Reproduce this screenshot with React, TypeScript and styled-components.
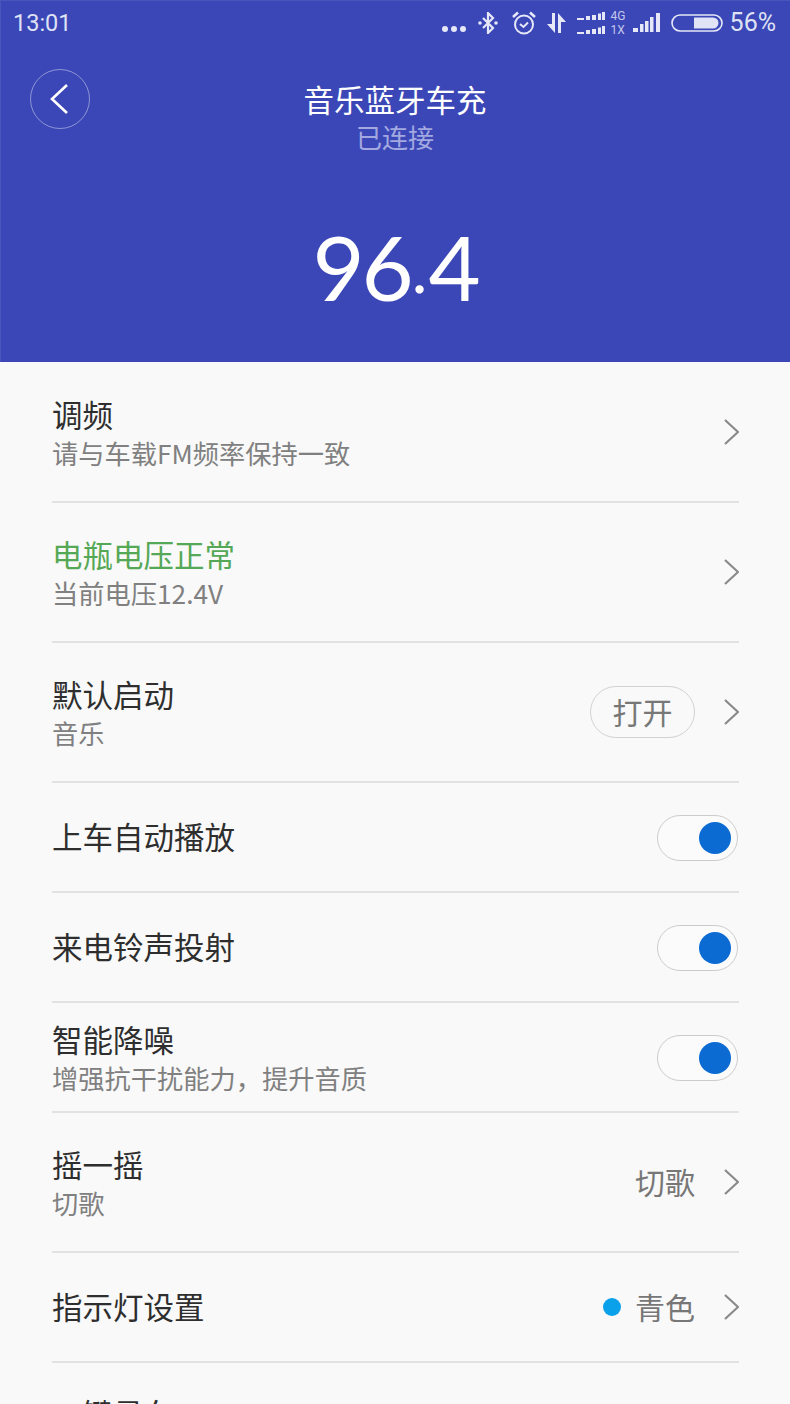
import React from 'react';
import styled, { createGlobalStyle } from 'styled-components';

const GlobalStyle = createGlobalStyle`
    html, body {
        margin: 0;
        padding: 0;
        background: #f9f9f9;
    }
    body {
        font-family: "Noto Sans CJK SC", "Noto Sans", sans-serif;
    }
`;

const Page = styled.div`
    width: 790px;
    height: 1404px;
    overflow: hidden;
    background: #f9f9f9;
`;

const Hero = styled.header`
    height: 362px;
    background: #3b47b7;
    box-shadow: inset 1px 1px 0 rgba(255, 255, 255, 0.08);
    display: flex;
    flex-direction: column;
`;

const StatusBar = styled.div`
    height: 45px;
    padding: 0 14px 0 13px;
    display: flex;
    align-items: center;
    justify-content: space-between;
    color: #dfe2f4;
    font-family: Roboto, sans-serif;
    font-size: 23.5px;
`;

const StatusIcons = styled.div`
    display: flex;
    align-items: center;
`;

const StatusIcon = styled.svg<{ $gap: number }>`
    display: block;
    margin-right: ${({ $gap }) => $gap}px;
    fill: none;
    stroke: #e6e8f7;
`;

const NetLabels = styled.div`
    width: 15px;
    margin-right: 7px;
    display: flex;
    flex-direction: column;
    font-size: 12px;
    line-height: 14px;
    color: #c3c7ea;
`;

const BatteryLevel = styled.span`
    font-size: 25px;
`;

const TitleBar = styled.div`
    margin-top: 24px;
    padding: 0 30px;
    display: grid;
    grid-template-columns: 60px 1fr 60px;
    align-items: start;
`;

const BackButton = styled.button`
    width: 60px;
    height: 60px;
    padding: 0 3px 0 0;
    border: 1px solid rgba(255, 255, 255, 0.42);
    border-radius: 50%;
    background: none;
    display: flex;
    align-items: center;
    justify-content: center;
`;

const TitleBlock = styled.div`
    display: flex;
    flex-direction: column;
    align-items: center;
    margin-top: 10px;
`;

const DeviceName = styled.div`
    color: #fff;
    font-size: 30.5px;
    line-height: 40px;
`;

const DeviceState = styled.div`
    color: #a3a9e0;
    font-size: 26px;
    line-height: 36px;
`;

const Frequency = styled.div`
    margin-top: 61px;
    text-align: center;
    color: #fff;
    font-family: Lato, sans-serif;
    font-weight: 400;
    font-size: 90px;
    letter-spacing: -3px;
    line-height: 100px;
`;

const FrequencyDot = styled.span`
    font-size: 66px;
    vertical-align: 8px;
    letter-spacing: 0;
    margin: 0 1px;
`;

const List = styled.ul`
    list-style: none;
    margin: 0;
    padding: 1px 51px 0 52px;
`;

const Row = styled.li<{ $height: number }>`
    height: ${({ $height }) => $height}px;
    box-sizing: border-box;
    border-bottom: 2px solid #e2e2e2;
    display: flex;
    align-items: center;
    justify-content: space-between;
`;

const RowText = styled.div`
    margin-top: 2px;
    display: flex;
    flex-direction: column;
`;

const RowTitle = styled.div<{ $ok?: boolean }>`
    color: ${({ $ok }) => ($ok ? '#55a855' : '#2e2e2e')};
    font-size: 30.5px;
    line-height: 40px;
`;

const SoloTitle = styled(RowTitle)`
    margin-bottom: 2px;
`;

const RowSub = styled.div`
    color: #808080;
    font-size: 26.25px;
    line-height: 38px;
`;

const RowRight = styled.div`
    display: flex;
    align-items: center;
`;

const Pill = styled.span`
    width: 105px;
    height: 52px;
    box-sizing: border-box;
    padding-bottom: 2px;
    border: 1px solid #d2d2d2;
    border-radius: 26px;
    color: #777;
    font-size: 30px;
    display: flex;
    align-items: center;
    justify-content: center;
`;

const Value = styled.span`
    margin-top: -2px;
    color: #777;
    font-size: 30px;
`;

const ColorDot = styled.span`
    width: 18px;
    height: 18px;
    border-radius: 50%;
    background: #0aa0ea;
    margin-right: 14px;
`;

const Chevron = styled.svg`
    display: block;
    margin-left: 29px;
    fill: none;
    stroke: #8a8a8a;
    stroke-width: 2.2;
`;

const Toggle = styled.span`
    width: 81px;
    height: 46px;
    margin-top: 2px;
    margin-right: 1px;
    box-sizing: border-box;
    border: 1px solid #cccccc;
    border-radius: 23px;
    background: #fbfbfb;
    padding-right: 6px;
    display: flex;
    align-items: center;
    justify-content: flex-end;
`;

const Knob = styled.span`
    width: 32px;
    height: 32px;
    border-radius: 50%;
    background: #0b6bd3;
`;

function Arrow() {
    return (
        <Chevron width="15" height="26" viewBox="0 0 15 26">
            <path d="M1 1 L14 13 L1 25" />
        </Chevron>
    );
}

export default function App() {
    return (
        <Page>
            <GlobalStyle />
            <Hero>
                <StatusBar>
                    <span>13:01</span>
                    <StatusIcons>
                        <StatusIcon $gap={12} width="24" height="20" viewBox="0 0 24 20">
                            <circle cx="3" cy="16" r="3" fill="#e6e8f7" stroke="none" />
                            <circle cx="12" cy="16" r="3" fill="#e6e8f7" stroke="none" />
                            <circle cx="21" cy="16" r="3" fill="#e6e8f7" stroke="none" />
                        </StatusIcon>
                        <StatusIcon $gap={14} width="20" height="22" viewBox="0 0 20 22" strokeWidth="2.2">
                            <path d="M5 6 L15 16 L10 21 L10 1 L15 6 L5 16" />
                            <circle cx="2" cy="11" r="1.8" fill="#e6e8f7" stroke="none" />
                            <circle cx="18" cy="11" r="1.8" fill="#e6e8f7" stroke="none" />
                        </StatusIcon>
                        <StatusIcon $gap={11} width="24" height="24" viewBox="0 0 24 24" strokeWidth="2">
                            <circle cx="12" cy="13.5" r="9" />
                            <path d="M8 13 L11.5 16 L16 11.5" />
                            <path d="M1 6 L6 1.5 M23 6 L18 1.5" strokeWidth="2.6" />
                        </StatusIcon>
                        <StatusIcon $gap={11} width="19" height="20" viewBox="0 0 19 20">
                            <path d="M5 0 H8 V20 L0 11 H5 Z" fill="#e6e8f7" stroke="none" />
                            <path d="M11 0 L19 9 H14 V20 H11 Z" fill="#e6e8f7" stroke="none" />
                        </StatusIcon>
                        <StatusIcon $gap={6} width="28" height="22" viewBox="0 0 28 22">
                            <g fill="#e6e8f7" stroke="none">
                                <rect x="0" y="6" width="7" height="2" />
                                <rect x="9" y="4" width="4" height="4" />
                                <rect x="15" y="3" width="4" height="5" />
                                <rect x="21" y="1.5" width="3" height="6.5" />
                                <rect x="25" y="0" width="3" height="8" />
                                <rect x="0" y="20" width="7" height="2" />
                                <rect x="9" y="18" width="4" height="4" />
                                <rect x="15" y="17" width="4" height="5" />
                                <rect x="21" y="15.5" width="3" height="6.5" />
                                <rect x="25" y="14" width="3" height="8" />
                            </g>
                        </StatusIcon>
                        <NetLabels>
                            <span>4G</span>
                            <span>1X</span>
                        </NetLabels>
                        <StatusIcon $gap={11} width="27" height="19" viewBox="0 0 27 19">
                            <g fill="#e6e8f7" stroke="none">
                                <rect x="0" y="15" width="5" height="4" />
                                <rect x="7" y="11" width="3.5" height="8" />
                                <rect x="12" y="8" width="3.5" height="11" />
                                <rect x="17" y="4" width="3.5" height="15" />
                                <rect x="23" y="0" width="4" height="19" />
                            </g>
                        </StatusIcon>
                        <StatusIcon $gap={7} width="52" height="18" viewBox="0 0 52 18">
                            <rect x="1" y="1" width="50" height="16" rx="8" strokeWidth="1.6" />
                            <path d="M23 3.5 H42 A5.5 5.5 0 0 1 42 14.5 H23 Z" fill="#e0e3f5" stroke="none" />
                        </StatusIcon>
                        <BatteryLevel>56%</BatteryLevel>
                    </StatusIcons>
                </StatusBar>
                <TitleBar>
                    <BackButton aria-label="back">
                        <svg width="20" height="32" viewBox="0 0 20 32" fill="none" stroke="#fff" strokeWidth="2.6">
                            <path d="M18 2 L3 16 L18 30" />
                        </svg>
                    </BackButton>
                    <TitleBlock>
                        <DeviceName>音乐蓝牙车充</DeviceName>
                        <DeviceState>已连接</DeviceState>
                    </TitleBlock>
                </TitleBar>
                <Frequency>96<FrequencyDot>.</FrequencyDot>4</Frequency>
            </Hero>
            <List>
                <Row $height={140}>
                    <RowText>
                        <RowTitle>调频</RowTitle>
                        <RowSub>请与车载FM频率保持一致</RowSub>
                    </RowText>
                    <RowRight><Arrow /></RowRight>
                </Row>
                <Row $height={140}>
                    <RowText>
                        <RowTitle $ok>电瓶电压正常</RowTitle>
                        <RowSub>当前电压12.4V</RowSub>
                    </RowText>
                    <RowRight><Arrow /></RowRight>
                </Row>
                <Row $height={140}>
                    <RowText>
                        <RowTitle>默认启动</RowTitle>
                        <RowSub>音乐</RowSub>
                    </RowText>
                    <RowRight>
                        <Pill>打开</Pill>
                        <Arrow />
                    </RowRight>
                </Row>
                <Row $height={110}>
                    <SoloTitle>上车自动播放</SoloTitle>
                    <Toggle><Knob /></Toggle>
                </Row>
                <Row $height={110}>
                    <SoloTitle>来电铃声投射</SoloTitle>
                    <Toggle><Knob /></Toggle>
                </Row>
                <Row $height={110}>
                    <RowText>
                        <RowTitle>智能降噪</RowTitle>
                        <RowSub>增强抗干扰能力{'\uFF0C'}提升音质</RowSub>
                    </RowText>
                    <Toggle><Knob /></Toggle>
                </Row>
                <Row $height={140}>
                    <RowText>
                        <RowTitle>摇一摇</RowTitle>
                        <RowSub>切歌</RowSub>
                    </RowText>
                    <RowRight>
                        <Value>切歌</Value>
                        <Arrow />
                    </RowRight>
                </Row>
                <Row $height={110}>
                    <SoloTitle>指示灯设置</SoloTitle>
                    <RowRight>
                        <ColorDot />
                        <Value>青色</Value>
                        <Arrow />
                    </RowRight>
                </Row>
                <Row $height={104}>
                    <SoloTitle>一键寻车</SoloTitle>
                </Row>
            </List>
        </Page>
    );
}
